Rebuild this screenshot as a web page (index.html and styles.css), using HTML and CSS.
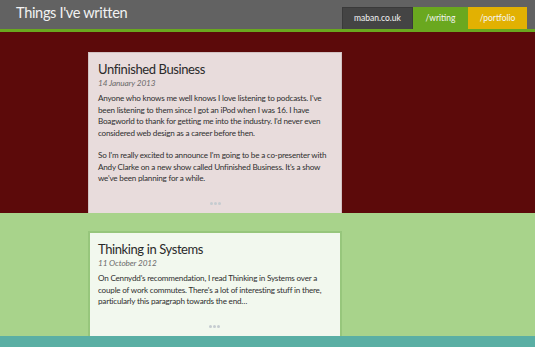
FILE: index.html
```html
<!DOCTYPE html>
<html lang="en">
<head>
    <meta charset="UTF-8">
    <meta name="viewport" content="width=device-width, initial-scale=1.0">
    <title>Things I've written</title>
    <link rel="stylesheet" href="styles.css">
</head>
<body>
    <!-- Header -->
    <header class="site-header">
        <h1>Things I've written</h1>
        <nav class="site-nav">
            <a href="#" class="nav-home">maban.co.uk</a>
            <a href="#" class="nav-writing">/writing</a>
            <a href="#" class="nav-portfolio">/portfolio</a>
        </nav>
    </header>

    <!-- Posts -->
    <section class="band band-red">
        <article class="post post-red">
            <h2>Unfinished Business</h2>
            <p class="date">14 January 2013</p>
            <p>Anyone who knows me well knows I love listening to podcasts. I've been listening to them since I got an iPod when I was 16. I have Boagworld to thank for getting me into the industry. I'd never even considered web design as a career before then.</p>
            <p>So I'm really excited to announce I'm going to be a co-presenter with Andy Clarke on a new show called Unfinished Business. It's a show we've been planning for a while.</p>
            <div class="more"><span></span><span></span><span></span></div>
        </article>
    </section>

    <section class="band band-green">
        <article class="post post-green">
            <h2>Thinking in Systems</h2>
            <p class="date">11 October 2012</p>
            <p>On Cennydd's recommendation, I read Thinking in Systems over a couple of work commutes. There's a lot of interesting stuff in there, particularly this paragraph towards the end&hellip;</p>
            <div class="more"><span></span><span></span><span></span></div>
        </article>
    </section>

    <section class="band band-teal"></section>
</body>
</html>
```

FILE: styles.css
```css
/* Reset */
* {
    margin: 0;
    padding: 0;
    box-sizing: border-box;
}

body {
    font-family: Lato, "Open Sans", sans-serif;
    color: #2f2f2f;
    background-color: #5aafa4;
}

/* Header */
.site-header {
    height: 32px;
    background-color: #626262;
    border-bottom: 3px solid #6aa81f;
    display: flex;
    justify-content: space-between;
    align-items: flex-end;
    padding: 0 8px 0 16px;
}

.site-header h1 {
    align-self: flex-start;
    font-size: 14.6px;
    font-weight: 400;
    letter-spacing: -0.35px;
    color: #f2f2f2;
    line-height: 26px;
}

.site-nav {
    display: flex;
}

.site-nav a {
    display: block;
    height: 22px;
    line-height: 22px;
    font-size: 8.5px;
    color: #f4f4f4;
    text-decoration: none;
    text-align: center;
}

.nav-home {
    width: 71px;
    background-color: #444;
    border: 1px solid #3a3a3a;
    border-bottom: none;
    line-height: 21px !important;
}

.nav-writing {
    width: 55px;
    background-color: #6aa81f;
}

.nav-portfolio {
    width: 59px;
    background-color: #e2b102;
}

/* Bands */
.band {
    padding-left: 88px;
}

.band-red {
    background-color: #5c0a0a;
    padding-top: 20px;
}

.band-green {
    background-color: #a8d38b;
    padding-top: 18px;
}

.band-teal {
    height: 13px;
}

/* Posts */
.post {
    width: 254px;
    padding: 7px 9px 8px;
}

.post-red {
    background-color: #e8dcdc;
    border: 1px solid #d2c2c2;
    border-bottom: none;
}

.post-green {
    background-color: #f2f8ee;
    border: 2px solid #97c67c;
    border-bottom: none;
    padding-left: 8px;
}

.post h2 {
    font-size: 13px;
    font-weight: 400;
    letter-spacing: -0.4px;
    color: #2a2a2a;
    line-height: 18px;
}

.post p {
    font-size: 8.1px;
    letter-spacing: -0.2px;
    line-height: 11.4px;
    margin-bottom: 11.4px;
}

.post .date {
    font-style: italic;
    color: #6a6a6a;
    font-size: 8.2px;
    letter-spacing: -0.1px;
    margin-bottom: 4px;
}

.more {
    display: flex;
    justify-content: center;
    gap: 1px;
    padding-top: 6px;
}

.more span {
    width: 3px;
    height: 3px;
    border-radius: 50%;
    background-color: #c5ccd0;
}
```
